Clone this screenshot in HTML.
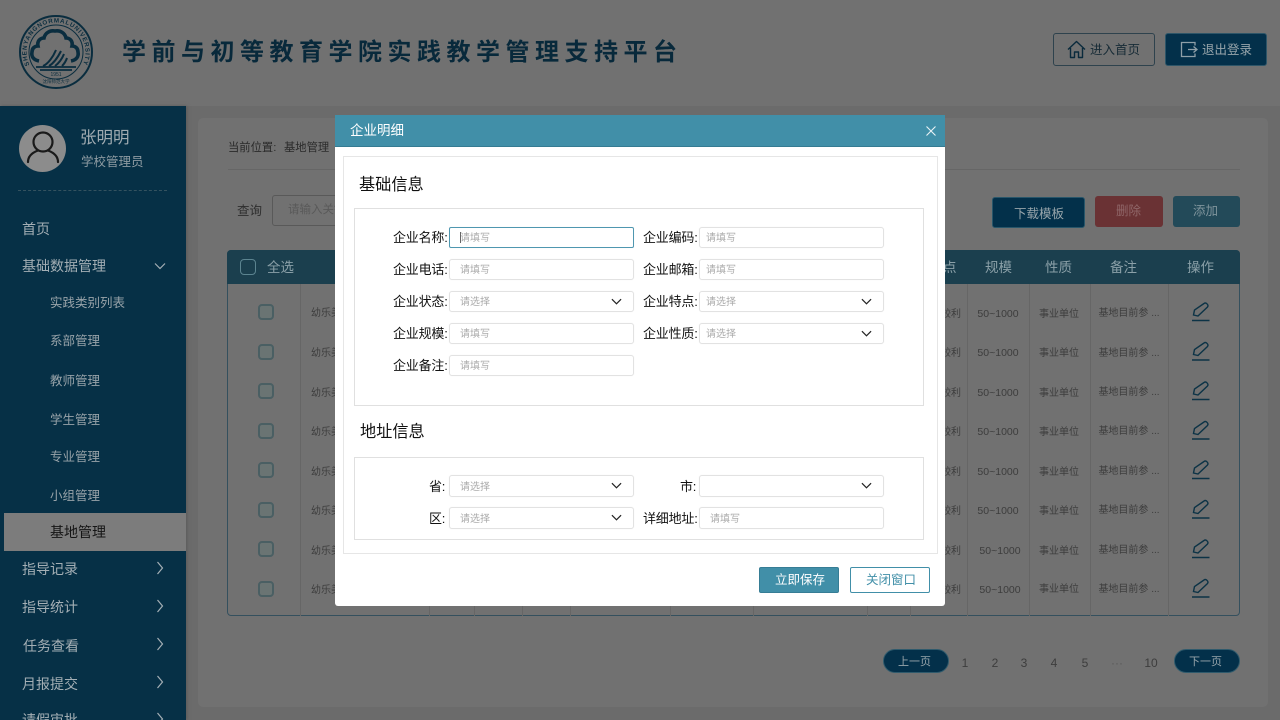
<!DOCTYPE html>
<html lang="zh"><head><meta charset="utf-8"><title>学前与初等教育学院实践教学管理支持平台</title>
<style>
*{box-sizing:border-box}
html,body{margin:0;padding:0;width:1280px;height:720px;overflow:hidden}
body{font-family:"Liberation Sans","Noto Sans CJK SC",sans-serif}
#r{position:relative;width:1280px;height:720px;overflow:hidden;background:#6b6b6b}
.a{position:absolute}
.t{position:absolute;line-height:22px;white-space:nowrap}
.s{color:#a4afb5;font-size:14px}
.u{color:#98a3a9;font-size:12.500px}
.c{position:absolute;color:#3d3d3d;font-size:10px;line-height:22px;white-space:nowrap;transform:translateX(-50%)}
.cb{position:absolute;left:258px;width:16px;height:16px;border:2px solid #4a5f63;border-radius:4px;background:#6a7473}
.v{position:absolute;top:284px;height:332px;width:1px;background:#666}
.l{position:absolute;color:#111;font-size:13px;line-height:22px;white-space:nowrap;letter-spacing:-.2px}
.i{position:absolute;width:185px;height:21px;border:1px solid #e2e2e2;border-radius:3px;background:#fff;color:#aaa;font-size:10px;line-height:22px;padding-left:10px;box-shadow:0 0 1px #eee}
.ch{position:absolute;right:11px;top:6px}
.pg{position:absolute;color:#3d3d3d;font-size:12px;line-height:22px;top:652px;transform:translateX(-50%)}
.h{font-size:13.500px;color:#8ba0a8;top:257px}
svg{display:block}
</style></head><body><div id="r">

<!-- header -->
<div class="a" style="left:0;top:0;width:1280px;height:106px;background:#717171"></div>
<svg class="a" style="left:17px;top:13px" width="78" height="78" viewBox="0 0 78 78">
<circle cx="39" cy="39" r="36" fill="none" stroke="#0a2d3f" stroke-width="2"/>
<circle cx="39" cy="39" r="27" fill="none" stroke="#0a2d3f" stroke-width="1"/>
<defs><path id="ring" d="M12.500 52A29.500 29.500 0 1 1 65.500 52"/></defs>
<text font-size="6.200" font-weight="bold" fill="#0a2d3f" font-family="Liberation Sans,sans-serif" textLength="118"><textPath href="#ring" textLength="118">SHENYANGNORMALUNIVERSITY</textPath></text>
<path d="M22 48c-5-1-8-4-7-9 0-4 3-6 6-6-1-5 2-8 6-8 1-5 6-8 11-7 5-1 10 2 11 7 4 0 7 3 6 8 3 0 6 2 6 6 1 5-2 8-7 9" fill="none" stroke="#0a2d3f" stroke-width="3.600"/>
<path d="M26 53c5-2 10-9 13-16M32 53c5-3 9-9 12-15M38 53c4-3 7-7 9-12M45 53c2-2 4-5 5-8" fill="none" stroke="#0a2d3f" stroke-width="2"/>
<path d="M19 54h40M23 57h32" stroke="#0a2d3f" stroke-width="1.800"/>
<text x="39" y="63" text-anchor="middle" font-size="5" fill="#0a2d3f" font-family="Liberation Sans,sans-serif">1951</text>
<text x="39" y="70" text-anchor="middle" font-size="4.500" fill="#0a2d3f" font-family="Noto Sans CJK SC,sans-serif">沈阳师范大学</text>
</svg>
<div class="t" style="left:122px;top:38px;line-height:30px;font-size:24px;font-weight:bold;letter-spacing:5.500px;color:#08293b">学前与初等教育学院实践教学管理支持平台</div>

<div class="a" style="left:1053px;top:33px;width:102px;height:33px;border:1px solid #2e424d;border-radius:3px"></div>
<svg class="a" style="left:1067px;top:40px" width="19" height="19" viewBox="0 0 19 19"><path d="M1 9.500 9.500 1.500 18 9.500M3.500 8v9.500H7.500v-5.500h4v5.500h4V8" fill="none" stroke="#0a2a3c" stroke-width="1.400" stroke-linejoin="round"/></svg>
<div class="t" style="left:1090px;top:39px;font-size:12.500px;color:#172b36">进入首页</div>
<div class="a" style="left:1165px;top:33px;width:102px;height:33px;background:#03304a;border-radius:3px;border:1px solid #2d5568"></div>
<svg class="a" style="left:1180px;top:41px" width="18" height="17" viewBox="0 0 18 17"><path d="M15 4.500V1.500H1.500V15.500H15V12.500M8 8.500H17M13.500 5.500 17 8.500 13.500 11.500" fill="none" stroke="#8fa0a8" stroke-width="1.300"/></svg>
<div class="t" style="left:1202px;top:39px;font-size:12.500px;color:#98a5ab">退出登录</div>

<!-- sidebar -->
<div class="a" style="left:0;top:106px;width:186px;height:614px;background:#063046;box-shadow:1px 0 3px #5a5a5a"></div>
<div class="a" style="left:19px;top:125px;width:47px;height:47px;border-radius:50%;background:#8c8c8c"></div>
<svg class="a" style="left:26px;top:130px" width="34" height="36" viewBox="0 0 34 36"><circle cx="17" cy="12" r="9.500" fill="none" stroke="#1a1a1a" stroke-width="2.200"/><path d="M2 32c0-7 6-10 10-11.500M32 32c0-7-6-10-10-11.500" fill="none" stroke="#1a1a1a" stroke-width="2.200" stroke-linecap="round"/></svg>
<div class="t" style="left:80px;top:127px;font-size:16.500px;color:#a0abb1">张明明</div>
<div class="t" style="left:81px;top:151px;font-size:12.500px;color:#8e9ba2">学校管理员</div>
<div class="a" style="left:18px;top:190px;width:149px;border-top:1px dashed #34525f"></div>

<div class="t s" style="left:22px;top:218px">首页</div>
<div class="t s" style="left:22px;top:255px">基础数据管理</div>
<svg class="a" style="left:154px;top:262px" width="12" height="8" viewBox="0 0 12 8"><path d="M1 1.500 6 6.500 11 1.500" fill="none" stroke="#a4afb5" stroke-width="1.200"/></svg>
<div class="t u" style="left:50px;top:292px">实践类别列表</div>
<div class="t u" style="left:50px;top:330px">系部管理</div>
<div class="t u" style="left:50px;top:370px">教师管理</div>
<div class="t u" style="left:50px;top:409px">学生管理</div>
<div class="t u" style="left:50px;top:446px">专业管理</div>
<div class="t u" style="left:50px;top:485px">小组管理</div>
<div class="a" style="left:4px;top:513px;width:182px;height:38px;background:#7c7c7c"></div>
<div class="t" style="left:50px;top:521px;font-size:14px;color:#151515">基地管理</div>
<div class="t s" style="left:22px;top:558px">指导记录</div>
<div class="t s" style="left:22px;top:596px">指导统计</div>
<div class="t s" style="left:23px;top:635px">任务查看</div>
<div class="t s" style="left:22px;top:673px">月报提交</div>
<div class="t s" style="left:22px;top:709px">请假审批</div>
<svg class="a" style="left:156px;top:0" width="10" height="720" viewBox="0 0 10 720"><path d="M1.500 562 6.500 568 1.500 574M1.500 600 6.500 606 1.500 612M1.500 638 6.500 644 1.500 650M1.500 676 6.500 682 1.500 688M1.500 713 6.500 719 1.500 725" fill="none" stroke="#a4afb5" stroke-width="1.200"/></svg>

<!-- content card -->
<div class="a" style="left:198px;top:118px;width:1070px;height:589px;background:#717171;border-radius:5px"></div>
<div class="t" style="left:228px;top:137px;font-size:11.300px;color:#2a2a2a">当前位置:</div>
<div class="t" style="left:284px;top:137px;font-size:11.300px;color:#2a2a2a">基地管理</div>
<div class="a" style="left:228px;top:169px;width:1012px;height:1px;background:#666"></div>
<div class="t" style="left:237px;top:200px;font-size:12.500px;color:#2e2e2e">查询</div>
<div class="a" style="left:272px;top:195px;width:120px;height:31px;border:1px solid #595959;border-radius:3px"></div>
<div class="t" style="left:288px;top:199px;font-size:11.500px;color:#595959">请输入关键字</div>
<div class="a" style="left:992px;top:197px;width:93px;height:31px;background:#03304a;border-radius:3px;border:1px solid #28566a"></div>
<div class="t" style="left:1014px;top:203px;font-size:12.500px;color:#98a5ab">下载模板</div>
<div class="a" style="left:1095px;top:196px;width:68px;height:31px;background:#6a3234;border-radius:3px"></div>
<div class="t" style="left:1116px;top:200px;font-size:12.500px;color:#8f6668">删除</div>
<div class="a" style="left:1173px;top:196px;width:67px;height:31px;background:#234a59;border-radius:3px"></div>
<div class="t" style="left:1193px;top:200px;font-size:12.500px;color:#7f949c">添加</div>

<!-- table -->
<div class="a" style="left:227px;top:250px;width:1013px;height:366px;border:1px solid #34505e;border-radius:4px"></div>
<div class="a" style="left:227px;top:250px;width:1013px;height:34px;background:#1b3f4e;border-radius:4px 4px 0 0"></div>
<div class="a" style="left:240px;top:259px;width:16px;height:16px;border:1px solid #5c8490;border-radius:4px"></div>
<div class="t h" style="left:267px">全选</div>
<div class="t h" style="left:943px">点</div>
<div class="t h" style="left:985px">规模</div>
<div class="t h" style="left:1045px">性质</div>
<div class="t h" style="left:1110px">备注</div>
<div class="t h" style="left:1187px">操作</div>
<div class="v" style="left:300px"></div><div class="v" style="left:429px"></div><div class="v" style="left:474px"></div><div class="v" style="left:522px"></div><div class="v" style="left:570px"></div><div class="v" style="left:670px"></div><div class="v" style="left:753px"></div><div class="v" style="left:867px"></div><div class="v" style="left:910px"></div><div class="v" style="left:967px"></div><div class="v" style="left:1029px"></div><div class="v" style="left:1090px"></div><div class="v" style="left:1168px"></div>

<div class="cb" style="top:304px"></div><div class="cb" style="top:344px"></div><div class="cb" style="top:383px"></div><div class="cb" style="top:423px"></div><div class="cb" style="top:462px"></div><div class="cb" style="top:502px"></div><div class="cb" style="top:541px"></div><div class="cb" style="top:581px"></div>
<div class="c" style="left:326px;top:303px">幼乐美</div><div class="c" style="left:326px;top:343px">幼乐美</div><div class="c" style="left:326px;top:383px">幼乐美</div><div class="c" style="left:326px;top:422px">幼乐美</div><div class="c" style="left:326px;top:462px">幼乐美</div><div class="c" style="left:326px;top:501px">幼乐美</div><div class="c" style="left:326px;top:541px">幼乐美</div><div class="c" style="left:326px;top:580px">幼乐美</div>

<div class="c" style="left:951px;top:304px">较利</div><div class="c" style="left:998px;top:303px;font-size:10.500px">50~1000</div><div class="c" style="left:1059px;top:304px">事业单位</div><div class="c" style="left:1129px;top:303px">基地目前参 ...</div>
<div class="c" style="left:951px;top:343px">较利</div><div class="c" style="left:998px;top:342px;font-size:10.500px">50~1000</div><div class="c" style="left:1059px;top:343px">事业单位</div><div class="c" style="left:1129px;top:343px">基地目前参 ...</div>
<div class="c" style="left:951px;top:383px">较利</div><div class="c" style="left:998px;top:382px;font-size:10.500px">50~1000</div><div class="c" style="left:1059px;top:383px">事业单位</div><div class="c" style="left:1129px;top:382px">基地目前参 ...</div>
<div class="c" style="left:951px;top:422px">较利</div><div class="c" style="left:998px;top:421px;font-size:10.500px">50~1000</div><div class="c" style="left:1059px;top:422px">事业单位</div><div class="c" style="left:1129px;top:421px">基地目前参 ...</div>
<div class="c" style="left:951px;top:462px">较利</div><div class="c" style="left:998px;top:461px;font-size:10.500px">50~1000</div><div class="c" style="left:1059px;top:462px">事业单位</div><div class="c" style="left:1129px;top:461px">基地目前参 ...</div>
<div class="c" style="left:951px;top:501px">较利</div><div class="c" style="left:998px;top:500px;font-size:10.500px">50~1000</div><div class="c" style="left:1059px;top:501px">事业单位</div><div class="c" style="left:1129px;top:500px">基地目前参 ...</div>
<div class="c" style="left:951px;top:541px">较利</div><div class="c" style="left:1000px;top:540px;font-size:10.500px">50~1000</div><div class="c" style="left:1059px;top:541px">事业单位</div><div class="c" style="left:1129px;top:540px">基地目前参 ...</div>
<div class="c" style="left:951px;top:580px">较利</div><div class="c" style="left:1000px;top:579px;font-size:10.500px">50~1000</div><div class="c" style="left:1059px;top:579px">事业单位</div><div class="c" style="left:1129px;top:579px">基地目前参 ...</div>

<svg class="a" style="left:1191px;top:0" width="20" height="610" viewBox="0 0 20 610" fill="none" stroke="#0c3346" stroke-width="1.400">
<path d="M2.500 315 3.500 310 13 303.500C15 302 18 305 16.500 307L7 316ZM1 320.500H18.500"/>
<path d="M2.500 354.500 3.500 349.500 13 343C15 341.500 18 344.500 16.500 346.500L7 355.500ZM1 360H18.500"/>
<path d="M2.500 394 3.500 389 13 382.500C15 381 18 384 16.500 386L7 395ZM1 399.500H18.500"/>
<path d="M2.500 433.500 3.500 428.500 13 422C15 420.500 18 423.500 16.500 425.500L7 434.500ZM1 439H18.500"/>
<path d="M2.500 473 3.500 468 13 461.500C15 460 18 463 16.500 465L7 474ZM1 478.500H18.500"/>
<path d="M2.500 512.500 3.500 507.500 13 501C15 499.500 18 502.500 16.500 504.500L7 513.500ZM1 518H18.500"/>
<path d="M2.500 552 3.500 547 13 540.500C15 539 18 542 16.500 544L7 553ZM1 557.500H18.500"/>
<path d="M2.500 591.500 3.500 586.500 13 580C15 578.500 18 581.500 16.500 583.500L7 592.500ZM1 597H18.500"/>
</svg>

<!-- pagination -->
<div class="a" style="left:883px;top:649px;width:66px;height:24px;border-radius:12px;background:#03304a;border:1px solid #2f5a6c"></div>
<div class="t" style="left:898px;top:651px;font-size:11px;color:#98a5ab">上一页</div>
<div class="pg" style="left:965px">1</div><div class="pg" style="left:995px">2</div><div class="pg" style="left:1024px">3</div><div class="pg" style="left:1054px">4</div><div class="pg" style="left:1085px">5</div><div class="pg" style="left:1117px;color:#595959">···</div><div class="pg" style="left:1151px">10</div>
<div class="a" style="left:1174px;top:649px;width:66px;height:24px;border-radius:12px;background:#03304a;border:1px solid #2f5a6c"></div>
<div class="t" style="left:1189px;top:651px;font-size:11px;color:#98a5ab">下一页</div>

<!-- modal -->
<div class="a" style="left:335px;top:115px;width:610px;height:491px;background:#fff;border-radius:0 0 3px 3px"></div>
<div class="a" style="left:335px;top:115px;width:610px;height:32px;background:#418fa8;border-bottom:1px solid #357b92"></div>
<div class="t" style="left:350px;top:120px;font-size:13.500px;color:#fff">企业明细</div>
<svg class="a" style="left:926px;top:126px" width="10" height="10" viewBox="0 0 10 10"><path d="M.5.500 9.500 9.500M9.500.500 .5 9.500" stroke="#e8f2f5" stroke-width="1.100"/></svg>
<div class="a" style="left:343px;top:156px;width:595px;height:398px;border:1px solid #e6e6e6"></div>
<div class="t" style="left:359px;top:174px;font-size:16.200px;color:#111">基础信息</div>
<div class="a" style="left:354px;top:208px;width:570px;height:198px;border:1px solid #e0e0e0"></div>

<div class="l" style="left:393px;top:227px">企业名称:</div>
<div class="i" style="left:449px;top:227px;border-color:#4f97b0;border-radius:2px">请填写</div>
<div class="a" style="left:460px;top:232px;width:1px;height:11px;background:#666"></div>
<div class="l" style="left:643px;top:227px">企业编码:</div>
<div class="i" style="left:699px;top:227px;padding-left:6px">请填写</div>
<div class="l" style="left:393px;top:259px">企业电话:</div>
<div class="i" style="left:449px;top:259px">请填写</div>
<div class="l" style="left:643px;top:259px">企业邮箱:</div>
<div class="i" style="left:699px;top:259px;padding-left:6px">请填写</div>
<div class="l" style="left:393px;top:291px">企业状态:</div>
<div class="i" style="left:449px;top:291px">请选择<svg class="ch" width="11" height="7" viewBox="0 0 12 7"><path d="M1 1 6 6 11 1" fill="none" stroke="#222" stroke-width="1.300"/></svg></div>
<div class="l" style="left:643px;top:291px">企业特点:</div>
<div class="i" style="left:699px;top:291px;padding-left:6px">请选择<svg class="ch" width="11" height="7" viewBox="0 0 12 7"><path d="M1 1 6 6 11 1" fill="none" stroke="#222" stroke-width="1.300"/></svg></div>
<div class="l" style="left:393px;top:323px">企业规模:</div>
<div class="i" style="left:449px;top:323px">请填写</div>
<div class="l" style="left:643px;top:323px">企业性质:</div>
<div class="i" style="left:699px;top:323px;padding-left:6px">请选择<svg class="ch" width="11" height="7" viewBox="0 0 12 7"><path d="M1 1 6 6 11 1" fill="none" stroke="#222" stroke-width="1.300"/></svg></div>
<div class="l" style="left:393px;top:355px">企业备注:</div>
<div class="i" style="left:449px;top:355px">请填写</div>

<div class="t" style="left:360px;top:421px;font-size:16.200px;color:#111">地址信息</div>
<div class="a" style="left:354px;top:457px;width:570px;height:83px;border:1px solid #e0e0e0"></div>
<div class="l" style="left:429px;top:476px">省:</div>
<div class="i" style="left:449px;top:475px;height:22px;line-height:23px">请选择<svg class="ch" width="11" height="7" viewBox="0 0 12 7"><path d="M1 1 6 6 11 1" fill="none" stroke="#222" stroke-width="1.300"/></svg></div>
<div class="l" style="left:680px;top:476px">市:</div>
<div class="i" style="left:699px;top:475px;height:22px"><svg class="ch" width="11" height="7" viewBox="0 0 12 7"><path d="M1 1 6 6 11 1" fill="none" stroke="#222" stroke-width="1.300"/></svg></div>
<div class="l" style="left:429px;top:508px">区:</div>
<div class="i" style="left:449px;top:507px;height:22px;line-height:23px">请选择<svg class="ch" width="11" height="7" viewBox="0 0 12 7"><path d="M1 1 6 6 11 1" fill="none" stroke="#222" stroke-width="1.300"/></svg></div>
<div class="l" style="left:643px;top:508px">详细地址:</div>
<div class="i" style="left:699px;top:507px;height:22px;line-height:23px">请填写</div>

<div class="a" style="left:759px;top:567px;width:80px;height:26px;background:#418fa8;border-radius:2px;border:1px solid #367d95"></div>
<div class="t" style="left:775px;top:569px;font-size:12.500px;color:#fff">立即保存</div>
<div class="a" style="left:850px;top:567px;width:80px;height:26px;background:#fff;border:1px solid #418fa8;border-radius:2px"></div>
<div class="t" style="left:866px;top:569px;font-size:12.500px;color:#418fa8">关闭窗口</div>
</div></body></html>
